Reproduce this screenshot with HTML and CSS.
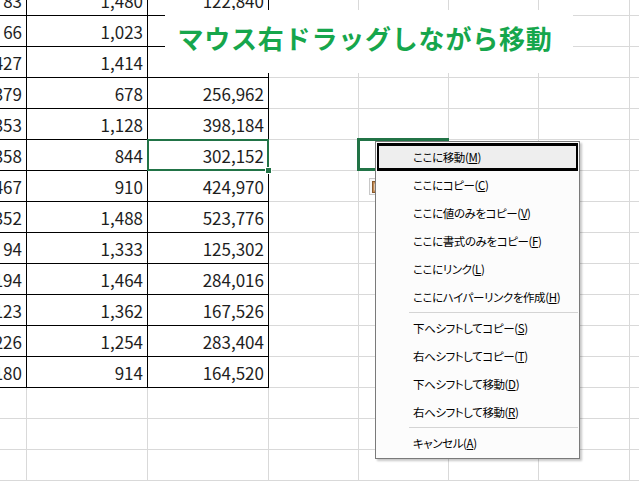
FILE: index.html
```html
<!DOCTYPE html>
<html lang="ja">
<head>
<meta charset="utf-8">
<title>マウス右ドラッグしながら移動</title>
<link rel="stylesheet" href="styles.css">
</head>
<body>
<div class="sheet">
  <div class="c t">83</div><div class="c t">1,480</div><div class="c t">122,840</div><div class="c"></div><div class="c"></div><div class="c"></div><div class="c"></div><div class="c"></div>
  <div class="c t">66</div><div class="c t">1,023</div><div class="c t"></div><div class="c"></div><div class="c"></div><div class="c"></div><div class="c"></div><div class="c"></div>
  <div class="c t">427</div><div class="c t">1,414</div><div class="c t"></div><div class="c"></div><div class="c"></div><div class="c"></div><div class="c"></div><div class="c"></div>
  <div class="c t">379</div><div class="c t">678</div><div class="c t">256,962</div><div class="c"></div><div class="c"></div><div class="c"></div><div class="c"></div><div class="c"></div>
  <div class="c t">353</div><div class="c t">1,128</div><div class="c t">398,184</div><div class="c"></div><div class="c"></div><div class="c"></div><div class="c"></div><div class="c"></div>
  <div class="c t">358</div><div class="c t">844</div><div class="c t sel">302,152<span class="sel-box"></span><span class="handle"></span></div><div class="c"></div><div class="c drag"><span class="drag-box"></span></div><div class="c"></div><div class="c"></div><div class="c"></div>
  <div class="c t">467</div><div class="c t">910</div><div class="c t">424,970</div><div class="c"></div><div class="c"></div><div class="c"></div><div class="c"></div><div class="c"></div>
  <div class="c t">352</div><div class="c t">1,488</div><div class="c t">523,776</div><div class="c"></div><div class="c"></div><div class="c"></div><div class="c"></div><div class="c"></div>
  <div class="c t">94</div><div class="c t">1,333</div><div class="c t">125,302</div><div class="c"></div><div class="c"></div><div class="c"></div><div class="c"></div><div class="c"></div>
  <div class="c t">194</div><div class="c t">1,464</div><div class="c t">284,016</div><div class="c"></div><div class="c"></div><div class="c"></div><div class="c"></div><div class="c"></div>
  <div class="c t">123</div><div class="c t">1,362</div><div class="c t">167,526</div><div class="c"></div><div class="c"></div><div class="c"></div><div class="c"></div><div class="c"></div>
  <div class="c t">226</div><div class="c t">1,254</div><div class="c t">283,404</div><div class="c"></div><div class="c"></div><div class="c"></div><div class="c"></div><div class="c"></div>
  <div class="c t">180</div><div class="c t">914</div><div class="c t">164,520</div><div class="c"></div><div class="c"></div><div class="c"></div><div class="c"></div><div class="c"></div>
  <div class="c"></div><div class="c"></div><div class="c"></div><div class="c"></div><div class="c"></div><div class="c"></div><div class="c"></div><div class="c"></div>
  <div class="c"></div><div class="c"></div><div class="c"></div><div class="c"></div><div class="c"></div><div class="c"></div><div class="c"></div><div class="c"></div>
  <div class="c"></div><div class="c"></div><div class="c"></div><div class="c"></div><div class="c"></div><div class="c"></div><div class="c"></div><div class="c"></div>
</div>

<div class="banner">マウス右ドラッグしながら移動</div>

<div class="paste-tag">
  <svg width="12" height="14" viewBox="0 0 12 14"><rect x="0.5" y="1.5" width="9" height="11" fill="#c08a55" stroke="#8a5a2c"/><rect x="2.5" y="3.5" width="5" height="7" fill="#fff"/><rect x="3" y="0.5" width="4" height="2" fill="#777"/></svg>
</div>

<div class="menu">
  <div class="item active">ここに移動(<u>M</u>)</div>
  <div class="item">ここにコピー(<u>C</u>)</div>
  <div class="item">ここに値のみをコピー(<u>V</u>)</div>
  <div class="item">ここに書式のみをコピー(<u>F</u>)</div>
  <div class="item">ここにリンク(<u>L</u>)</div>
  <div class="item">ここにハイパーリンクを作成(<u>H</u>)</div>
  <div class="sep"></div>
  <div class="item">下へシフトしてコピー(<u>S</u>)</div>
  <div class="item">右へシフトしてコピー(<u>T</u>)</div>
  <div class="item">下へシフトして移動(<u>D</u>)</div>
  <div class="item">右へシフトして移動(<u>R</u>)</div>
  <div class="sep"></div>
  <div class="item">キャンセル(<u>A</u>)</div>
</div>
</body>
</html>
```

FILE: styles.css
```css
html, body {
  margin: 0;
  padding: 0;
}
body {
  position: relative;
  width: 639px;
  height: 482px;
  overflow: hidden;
  background: #ffffff;
  font-family: "Noto Sans CJK JP", "Noto Sans", sans-serif;
}
.sheet {
  display: grid;
  grid-template-columns: 27px 121px 121px 90px 90px 90px 91px 60px;
  grid-auto-rows: 31px;
  margin-top: -15px;
}
.c {
  box-sizing: border-box;
  border-right: 1px solid #d9d9d9;
  border-bottom: 1px solid #d9d9d9;
  display: flex;
  justify-content: flex-end;
  align-items: center;
  padding-right: 4px;
  overflow: hidden;
  white-space: nowrap;
  font-size: 17px;
  color: #1e1e1e;
}
.c.t {
  border-right-color: #000;
  border-bottom-color: #000;
}
.sel, .drag {
  position: relative;
  overflow: visible;
}
.sel-box {
  position: absolute;
  left: -1px;
  top: -1px;
  right: -1px;
  bottom: -1px;
  border: 2px solid #217346;
}
.handle {
  position: absolute;
  right: -4px;
  bottom: -4px;
  width: 5px;
  height: 5px;
  background: #217346;
  border: 1px solid #fff;
}
.drag-box {
  position: absolute;
  left: -2px;
  top: -2px;
  right: -1px;
  bottom: -1px;
  border: 3px solid #217346;
}
.banner {
  position: absolute;
  left: 165px;
  top: 10px;
  width: 408px;
  height: 63px;
  box-sizing: border-box;
  background: #fff;
  display: flex;
  justify-content: center;
  align-items: center;
  padding: 0 8px 8px 0;
  font-size: 26px;
  font-weight: 700;
  color: #16a64c;
  letter-spacing: 0.8px;
  white-space: nowrap;
}
.paste-tag {
  position: absolute;
  left: 369px;
  top: 178px;
  width: 22px;
  height: 17px;
  box-sizing: border-box;
  border: 1px solid #c8c8c8;
  background: #f8f8f8;
  display: flex;
  align-items: center;
  padding-left: 2px;
}
.menu {
  position: absolute;
  left: 375px;
  top: 141px;
  width: 205px;
  box-sizing: border-box;
  border: 1px solid #7a7a7a;
  background: #fcfcfc;
  padding: 1px;
  box-shadow: 2px 2px 2px rgba(0,0,0,0.22);
  display: flex;
  flex-direction: column;
}
.item {
  height: 28px;
  box-sizing: border-box;
  display: flex;
  align-items: center;
  padding-left: 36px;
  font-size: 11.5px;
  letter-spacing: -0.4px;
  font-feature-settings: "palt";
  color: #000;
  white-space: nowrap;
}
.item u {
  text-underline-offset: 1px;
}
.item.active {
  border: 3px solid #000;
  border-left-width: 2px;
  border-right-width: 2px;
  padding-left: 34px;
  background: #eeeeee;
}
.sep {
  height: 3px;
  display: flex;
  align-items: center;
  padding-left: 32px;
}
.sep::after {
  content: "";
  display: block;
  flex: 1;
  height: 1px;
  background: #d4d4d4;
}
```
